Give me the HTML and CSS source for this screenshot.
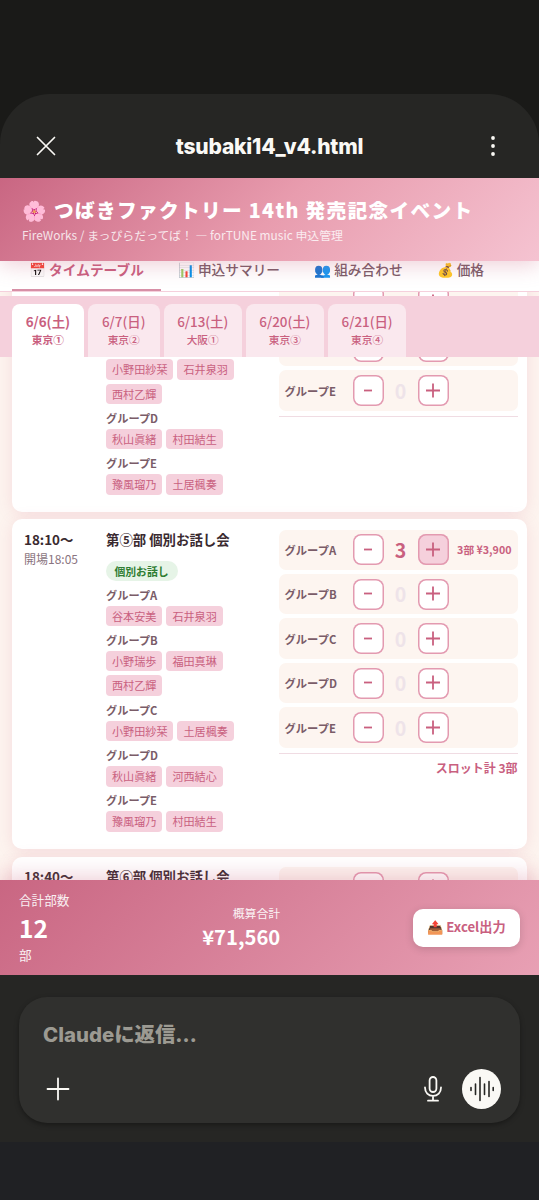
FILE: index.html
```
<!DOCTYPE html>
<html lang="ja">
<head>
  <meta charset="UTF-8">
  <title>tsubaki14_v4.html</title>
  <meta name="viewport" content="width=device-width, initial-scale=1">
  <link rel="stylesheet" href="styles.css">
</head>
<body>
  <div class="sheet">
    <div class="topbar">
      <svg class="icon-close" width="20" height="20" viewBox="0 0 20 20"><path d="M1.5 1.5l17 17M18.5 1.5l-17 17"/></svg>
      <div class="file-name">tsubaki14_v4.html</div>
      <svg class="icon-more" width="6" height="22" viewBox="0 0 6 22"><circle cx="3" cy="3" r="1.9"/><circle cx="3" cy="11" r="1.9"/><circle cx="3" cy="19" r="1.9"/></svg>
    </div>

    <div class="webview">
      <header class="header">
        <h1>🌸 つばきファクトリー 14th 発売記念イベント</h1>
        <p>FireWorks / まっぴらだってば！ — forTUNE music 申込管理</p>
      </header>

      <nav class="nav">
        <button class="nav-btn active">📅 タイムテーブル</button>
        <button class="nav-btn">📊 申込サマリー</button>
        <button class="nav-btn">👥 組み合わせ</button>
        <button class="nav-btn">💰 価格</button>
      </nav>

      <div class="days">
        <button class="day active">6/6(土)<small>東京①</small></button>
        <button class="day">6/7(日)<small>東京②</small></button>
        <button class="day wide">6/13(土)<small>大阪①</small></button>
        <button class="day wide">6/20(土)<small>東京③</small></button>
        <button class="day wide">6/21(日)<small>東京④</small></button>
      </div>

      <main class="content">
        <div class="slots" id="slots"></div>
      </main>

      <footer class="summary">
        <div class="sum-count">
          <span>合計部数</span>
          <strong>12</strong>
          <span>部</span>
        </div>
        <div class="sum-price">
          <span>概算合計</span>
          <strong>¥71,560</strong>
        </div>
        <button class="export">📤 Excel出力</button>
      </footer>
    </div>

    <div class="composer-area">
      <div class="composer">
        <div class="placeholder">Claudeに返信…</div>
        <div class="composer-row">
          <svg class="icon-line" width="24" height="24" viewBox="0 0 24 24"><path d="M12 1.5v21M1.5 12h21"/></svg>
          <svg class="icon-line icon-mic" width="18" height="26" viewBox="0 0 18 26"><rect x="5.6" y="1" width="6.8" height="15" rx="3.4"/><path d="M1 11.5c0 5 3.3 8.4 8 8.4s8-3.4 8-8.4M9 20v4.5M4 24.7h10"/></svg>
          <div class="voice">
            <svg width="26" height="26" viewBox="0 0 26 26"><path d="M2 11.5v3M6.5 8v10.5M11 1.5v23M15.5 8v10.5M20 5.5v15M24.2 11.5v3"/></svg>
          </div>
        </div>
      </div>
    </div>
  </div>

  <script>
    const slots = [
      {
        // heading is scrolled out of view
        scrolled: true,
        groups: {
          C: ['小野田紗栞', '石井泉羽', '西村乙輝'],
          D: ['秋山眞緒', '村田結生'],
          E: ['豫風瑠乃', '土居楓奏']
        },
        counts: {}
      },
      {
        time: '18:10〜', open: '開場18:05', title: '第⑤部 個別お話し会',
        groups: {
          A: ['谷本安美', '石井泉羽'],
          B: ['小野瑞歩', '福田真琳', '西村乙輝'],
          C: ['小野田紗栞', '土居楓奏'],
          D: ['秋山眞緒', '河西結心'],
          E: ['豫風瑠乃', '村田結生']
        },
        counts: { A: 3 }
      },
      {
        time: '18:40〜', title: '第⑥部 個別お話し会',
        groups: { A: [] },
        counts: {}
      }
    ];
    const PRICE = 1300;

    function renderGroup([key, members]) {
      if (!members.length) return '';
      return `
        <div class="group">
          <div class="group-name">グループ${key}</div>
          <div class="chips">${members.map(m => `<span class="chip">${m}</span>`).join('')}</div>
        </div>`;
    }

    function renderCounter(key, n, named) {
      return `
        <div class="counter">
          <span class="counter-name">${named ? `グループ${key}` : ''}</span>
          <button class="step"><svg width="16" height="16" viewBox="0 0 16 16"><path d="M4 7.5h8"/></svg></button>
          <span class="num ${n ? 'on' : ''}">${named ? n : ''}</span>
          <button class="step ${n ? 'on' : ''}"><svg width="16" height="16" viewBox="0 0 16 16"><path d="M1 7.5h14M8 .5v14"/></svg></button>
          <span class="cost">${n ? `${n}部 ¥${(n * PRICE).toLocaleString()}` : ''}</span>
        </div>`;
    }

    function renderSlot(s) {
      const total = Object.values(s.counts).reduce((a, b) => a + b, 0);
      const visible = key => s.scrolled ? key === 'E' : Boolean(s.open);
      return `
        <section class="card ${s.scrolled ? 'scrolled' : ''}">
          <div class="when">${s.scrolled ? '' : `<b>${s.time}</b><span>${s.open || ''}</span>`}</div>
          <div class="info">
            ${s.scrolled ? '' : `<h2>${s.title}</h2>`}
            ${s.open ? '<span class="badge">個別お話し</span>' : ''}
            ${Object.entries(s.groups).map(renderGroup).join('')}
          </div>
          <div class="counters">
            ${Object.keys(s.groups).map(k => renderCounter(k, s.counts[k] || 0, visible(k))).join('')}
            <div class="slot-total">${total ? `スロット計 ${total}部` : ''}</div>
          </div>
        </section>`;
    }

    document.getElementById('slots').innerHTML = slots.map(renderSlot).join('');
  </script>
</body>
</html>
```
FILE: styles.css
```
* {
  box-sizing: border-box;
}

body {
  margin: 0;
  height: 1200px;
  padding: 94px 0 58px;
  overflow: hidden;
  background: linear-gradient(#1a1a18 0, #1a1a18 1142px, #202124 1142px);
  font-family: 'Noto Sans CJK JP', sans-serif;
  color: #3a2a30;
}

button {
  font-family: inherit;
  border: none;
  padding: 0;
  margin: 0;
}

.sheet {
  height: 1048px;
  display: flex;
  flex-direction: column;
  background: #262624;
  border-radius: 50px 50px 0 0;
}

/* app bar */
.topbar {
  height: 84px;
  flex: none;
  display: flex;
  align-items: center;
  justify-content: space-between;
  padding: 20px 43px 0 36px;
}

.icon-close {
  fill: none;
  stroke: #faf9f5;
  stroke-width: 1.7;
  stroke-linecap: round;
}

.icon-more {
  fill: #faf9f5;
}

.file-name {
  margin-right: 7px;
  font-family: Inter, sans-serif;
  font-size: 21px;
  font-weight: 800;
  letter-spacing: -0.2px;
  line-height: 28px;
  padding-top: 2px;
  color: #faf9f5;
}

/* page */
.webview {
  height: 797px;
  flex: none;
  display: flex;
  flex-direction: column;
  overflow: hidden;
  background: #fdf4ef;
}

.header {
  height: 83px;
  flex: none;
  padding: 16px 22px 0;
  background: linear-gradient(135deg, #c96682 0%, #e89cae 50%, #f5c3d1 100%);
  box-shadow: 0 4px 20px rgba(201, 96, 127, 0.3);
  color: #fff;
  position: relative;
  z-index: 3;
}

.header h1 {
  margin: 0;
  font-size: 19.7px;
  font-weight: 900;
  letter-spacing: 1.3px;
  line-height: 31px;
  white-space: nowrap;
}

.header p {
  margin: 0;
  font-size: 11.9px;
  line-height: 20px;
  opacity: 0.8;
  white-space: nowrap;
}

.nav {
  height: 31px;
  flex: none;
  display: flex;
  padding: 0 12px;
  background: #fff;
  border-bottom: 1px solid #f5d0dc;
  position: relative;
  z-index: 2;
}

.nav-btn {
  height: 30px;
  padding: 0 17px 12px;
  line-height: 16px;
  background: none;
  font-size: 13.7px;
  font-weight: 500;
  color: #7a5c68;
  white-space: nowrap;
  border-bottom: 2px solid transparent;
}

.nav-btn.active {
  font-weight: 700;
  color: #c9607f;
  border-bottom-color: #d78fa6;
}

.days {
  height: 61px;
  flex: none;
  display: flex;
  gap: 4px;
  margin-top: 4px;
  padding: 8px 12px 0;
  background: #f5d0dc;
  position: relative;
  z-index: 2;
}

.day {
  width: 71.8px;
  padding-bottom: 2px;
  border-radius: 8px 8px 0 0;
  background: rgba(255, 255, 255, 0.5);
  color: #c9607f;
  font-size: 13.4px;
  font-weight: 500;
  line-height: 20px;
}

.day.wide {
  width: 78.2px;
}

.day.active {
  background: #fff;
  font-weight: 700;
}

.day small {
  display: block;
  font-size: 10.7px;
  line-height: 18px;
}

.content {
  flex: 1;
  min-height: 0;
  margin-top: -65px;
  padding: 0 12px;
  overflow: hidden;
}

.slots {
  display: flex;
  flex-direction: column;
  gap: 7.5px;
  margin-top: -21px;
}

.card {
  height: 330px;
  flex: none;
  display: grid;
  grid-template-columns: 82px 1fr 239px;
  padding: 10.5px 9.5px 10px 12px;
  background: #fff;
  border-radius: 10px;
  box-shadow: 0 2px 16px rgba(201, 96, 127, 0.15);
}

.card.scrolled {
  height: 240.500px;
}

.card.scrolled .info {
  display: flex;
  flex-direction: column;
  justify-content: flex-end;
  padding-bottom: 2px;
}

.when b {
  display: block;
  margin-top: -1px;
  font-size: 13.4px;
  line-height: 20px;
}

.when span {
  display: block;
  font-size: 12px;
  line-height: 20px;
  color: #8a7480;
}

.info h2 {
  margin: -1px 0 11px;
  font-size: 13.4px;
  line-height: 21px;
  font-weight: 700;
}

.badge {
  display: block;
  width: 72px;
  margin-bottom: 4.7px;
  padding-left: 8.5px;
  border-radius: 10px;
  background: #e6f4e7;
  color: #2e7d32;
  font-size: 10.8px;
  font-weight: 700;
  line-height: 20.5px;
}

.group {
  margin-bottom: 4.8px;
}

.group-name {
  margin-bottom: 2px;
  font-size: 11.2px;
  font-weight: 700;
  line-height: 18px;
  color: #7a5c68;
}

.chips {
  display: flex;
  flex-wrap: wrap;
  gap: 4px;
  padding-right: 30px;
}

.chip {
  padding: 0 6px;
  border-radius: 4px;
  background: #f5d0dc;
  color: #c9607f;
  font-size: 11.1px;
  line-height: 20.5px;
}

.counters {
  display: flex;
  flex-direction: column;
  gap: 4.2px;
}

.counter {
  height: 40.3px;
  flex: none;
  display: flex;
  align-items: center;
  padding-left: 6px;
  border-radius: 7px;
  background: #fdf5f0;
}

.counter-name {
  width: 68px;
  font-size: 11.3px;
  font-weight: 700;
  color: #7a5c68;
}

.step {
  width: 31px;
  height: 31px;
  display: flex;
  align-items: center;
  justify-content: center;
  border-radius: 8px;
  background: #fff;
  box-shadow: inset 0 0 0 1.5px #e39ab0;
}

.step.on {
  background: #f5d0dc;
}

.step svg {
  fill: none;
  stroke: #c9607f;
  stroke-width: 1.8;
}

.num {
  width: 34px;
  text-align: center;
  font-size: 19.5px;
  font-weight: 700;
  line-height: 30px;
  color: #eee3e9;
}

.num.on {
  color: #c9607f;
}

.cost {
  flex: 1;
  padding-right: 6px;
  text-align: right;
  font-size: 10.7px;
  font-weight: 700;
  color: #c9607f;
}

.slot-total {
  margin-top: 1px;
  border-top: 1px solid #f0dce3;
  padding-top: 4px;
  text-align: right;
  font-size: 12px;
  font-weight: 700;
  line-height: 20px;
  color: #c9607f;
}

/* totals bar */
.summary {
  height: 95px;
  flex: none;
  display: flex;
  align-items: center;
  justify-content: space-between;
  padding: 0 19px;
  background: linear-gradient(135deg, #c96682, #e8a0b4);
  box-shadow: 0 -4px 20px rgba(201, 96, 127, 0.3);
  color: #fff;
  position: relative;
  z-index: 2;
}

.summary span {
  display: block;
  font-size: 12.6px;
  line-height: 18px;
  opacity: 0.9;
}

.summary strong {
  display: block;
}

.sum-count strong {
  font-size: 24.5px;
  line-height: 37px;
}

.sum-price {
  text-align: right;
}

.sum-price span {
  font-size: 11.9px;
}

.sum-price strong {
  font-size: 20.2px;
  line-height: 30px;
}

.export {
  width: 107px;
  height: 38px;
  padding-bottom: 2px;
  border-radius: 10px;
  background: #fff;
  box-shadow: 0 2px 8px rgba(0, 0, 0, 0.15);
  color: #c9607f;
  font-size: 13.2px;
  font-weight: 700;
  white-space: nowrap;
}

/* reply box */
.composer-area {
  flex: 1;
  padding: 22px 19px 0;
}

.composer {
  height: 126px;
  padding: 22px 19px 0 24px;
  border-radius: 28px;
  background: #30302e;
  box-shadow: 0 2px 5px rgba(0, 0, 0, 0.35);
}

.placeholder {
  font-family: Inter, 'Noto Sans CJK JP', sans-serif;
  font-size: 20.4px;
  font-weight: 800;
  line-height: 32px;
  color: #9c9a92;
}

.composer-row {
  display: flex;
  align-items: center;
  margin-top: 18px;
  padding-left: 3px;
}

.icon-line {
  fill: none;
  stroke: #faf9f5;
  stroke-width: 1.8;
  stroke-linecap: round;
}

.icon-mic {
  margin-left: auto;
  margin-right: 20px;
}

.voice {
  width: 39px;
  height: 40px;
  display: flex;
  align-items: center;
  justify-content: center;
  border-radius: 50%;
  background: #faf9f5;
}

.voice path {
  fill: none;
  stroke: #262624;
  stroke-width: 1.6;
  stroke-linecap: round;
}
```
